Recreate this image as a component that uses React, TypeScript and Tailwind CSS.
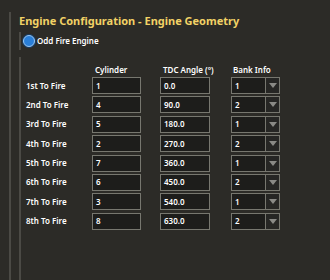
import React from "react";

const rows = [
  ["1st To Fire", "1", "0.0", "1"],
  ["2nd To Fire", "4", "90.0", "2"],
  ["3rd To Fire", "5", "180.0", "1"],
  ["4th To Fire", "2", "270.0", "2"],
  ["5th To Fire", "7", "360.0", "1"],
  ["6th To Fire", "6", "450.0", "2"],
  ["7th To Fire", "3", "540.0", "1"],
  ["8th To Fire", "8", "630.0", "2"],
];

function Box({ value, w }: { value: string; w: string }) {
  return (
    <div className={`${w} h-[17px] border border-[#77776f] bg-[#1d1d1b] flex items-center pl-[3px] text-[8px] font-semibold text-white leading-none`}>
      {value}
    </div>
  );
}

function Select({ value }: { value: string }) {
  return (
    <div className="w-[49px] h-[17px] border border-[#77776f] bg-[#1d1d1b] flex items-stretch text-[8px] font-semibold text-white leading-none">
      <div className="flex-1 flex items-center pl-[3px]">{value}</div>
      <div className="w-[14px] border-l border-[#77776f] bg-[#262624] flex items-center justify-center">
        <svg width="8" height="5" viewBox="0 0 8 5">
          <path d="M0 0 L8 0 L4 5 Z" fill="#8a8a86" />
        </svg>
      </div>
    </div>
  );
}

export default function App() {
  return (
    <div
      className="w-[330px] h-[280px] bg-[#2c2b27] overflow-hidden pl-[9px] pt-[12px]"
      style={{ fontFamily: '"Noto Sans", "Open Sans", sans-serif' }}
    >
      <div className="h-full border-l-2 border-[#4b4a45] pl-[8px]">
        <div className="text-[11px] font-bold text-[#f2d266] leading-none pt-[3px]">
          Engine Configuration - Engine Geometry
        </div>
        <div className="mt-[6px] border-l-2 border-[#4b4a45] h-[18px] pl-[2px] flex items-center gap-[2px]">
          <div className="w-[12px] h-[12px] rounded-full bg-[#2a7fd8] border border-[#9cc8f2] shadow-[0_0_0_1px_#1b3f66]" />
          <span className="text-[8px] font-semibold text-white">Odd Fire Engine</span>
        </div>
        <div className="mt-[7px] border-l-2 border-[#4b4a45] h-[230px] pl-[5px] pt-[7px]">
          <div className="flex text-[8px] font-semibold text-white leading-none h-[12px] items-center">
            <div className="w-[66px]" />
            <div className="w-[68px] pl-[3px]">Cylinder</div>
            <div className="w-[71px] pl-[3px]">TDC Angle (°)</div>
            <div className="pl-[2px]">Bank Info</div>
          </div>
          <div className="mt-[1px] flex flex-col gap-[2.4px]">
            {rows.map(([label, cyl, tdc, bank]) => (
              <div key={label} className="flex items-center h-[17px]">
                <div className="w-[66px] text-[8px] font-semibold text-white">{label}</div>
                <Box value={cyl} w="w-[49px]" />
                <div className="w-[19px]" />
                <Box value={tdc} w="w-[50px]" />
                <div className="w-[21px]" />
                <Select value={bank} />
              </div>
            ))}
          </div>
        </div>
      </div>
    </div>
  );
}
